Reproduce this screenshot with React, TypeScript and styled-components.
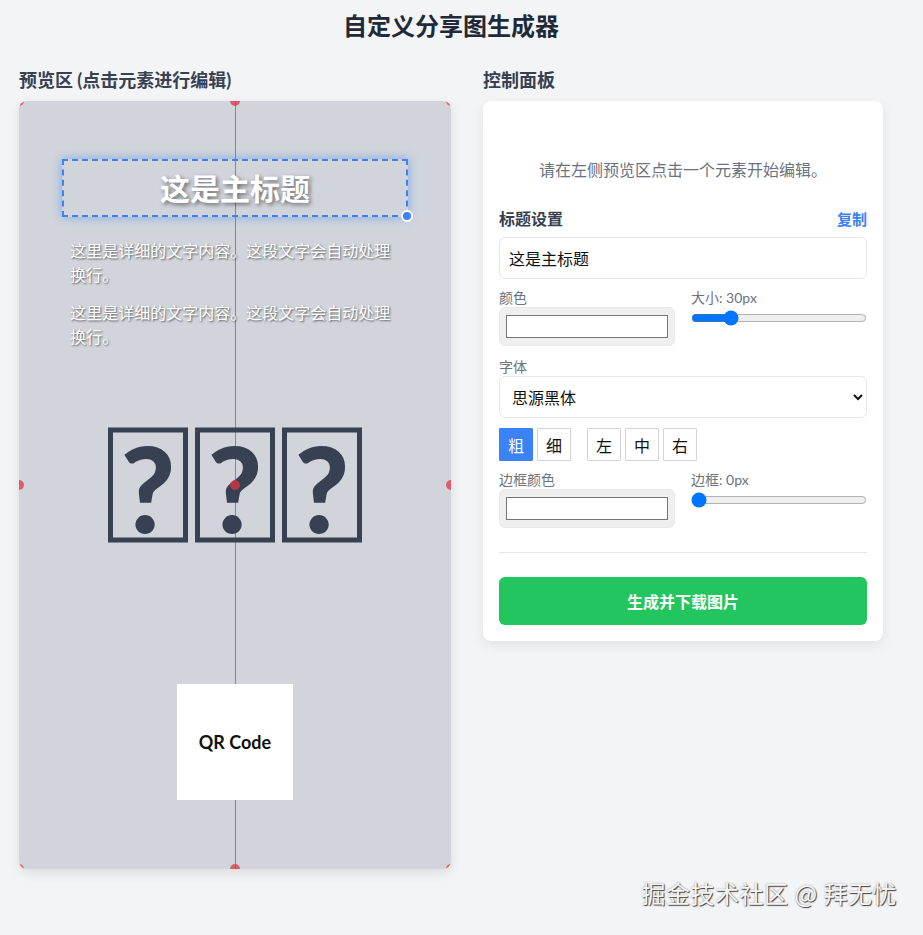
import { FC } from "react";
import styled, { createGlobalStyle } from "styled-components";

const GlobalStyle = createGlobalStyle`
  html, body {
    margin: 0;
    padding: 0;
    background: #f3f4f6;
    font-family: "Lato", "Noto Sans CJK SC", sans-serif;
    color: #1f2937;
  }
`;

const Page = styled.div`
  position: relative;
  min-height: 935px;
  box-sizing: border-box;
  padding: 12px 0 0 19px;
`;

const Title = styled.h1`
  width: 864px;
  margin: 0;
  text-align: center;
  font-size: 24px;
  line-height: 28px;
  font-weight: 700;
  color: #1f2937;
`;

const Columns = styled.div`
  display: flex;
  gap: 32px;
  margin-top: 29px;
  width: 864px;
  align-items: flex-start;
`;

const Column = styled.section<{ $width: number }>`
  width: ${(p) => p.$width}px;
  flex: none;
`;

const ColHeading = styled.h2`
  margin: 0 0 10px;
  font-size: 18px;
  line-height: 22px;
  font-weight: 700;
  color: #374151;
`;

/* ---------- preview canvas ---------- */

const Canvas = styled.div`
  position: relative;
  width: 432px;
  height: 768px;
  background: #d1d5db;
  border-radius: 8px;
  overflow: hidden;
  box-shadow: 0 4px 12px rgba(0, 0, 0, 0.1);
`;

const GuideLine = styled.div`
  position: absolute;
  left: 216px;
  top: 0;
  bottom: 0;
  width: 1px;
  background: #4f8ef7;
`;

const TitleBox = styled.div`
  position: absolute;
  left: 10%;
  top: 58px;
  width: 80%;
  box-sizing: border-box;
  padding: 10px;
  border: 2px dashed #3b82f6;
  box-shadow: 0 0 10px rgba(59, 130, 246, 0.55);
  text-align: center;
  font-size: 30px;
  line-height: 34px;
  font-weight: 700;
  color: #ffffff;
  text-shadow: 2px 2px 4px rgba(0, 0, 0, 0.5);
`;

const Handle = styled.span`
  position: absolute;
  right: -7px;
  bottom: -7px;
  width: 8px;
  height: 8px;
  border-radius: 50%;
  background: #3b82f6;
  border: 2px solid #ffffff;
`;

const TextBox = styled.div`
  position: absolute;
  left: 10%;
  top: 130px;
  width: 80%;
  box-sizing: border-box;
  padding: 8px;
  font-size: 16px;
  line-height: 24px;
  color: #ffffff;
  text-shadow: 1px 1px 2px rgba(0, 0, 0, 0.6);

  p {
    margin: 0 0 14px;
  }
`;

const ImageBox = styled.div`
  position: absolute;
  left: 50%;
  top: 50%;
  transform: translate(-50%, -50%);
  display: flex;
  gap: 7px;
`;

const Tofu = styled.span`
  width: 80px;
  height: 115px;
  box-sizing: border-box;
  border: 5px solid #374151;
  display: flex;
  justify-content: center;
  align-items: flex-start;
  font-family: "Lato", sans-serif;
  font-weight: 900;
  font-size: 118px;
  line-height: 110px;
  color: #374151;
`;

const QrBox = styled.div`
  position: absolute;
  left: 158px;
  top: 583px;
  width: 116px;
  height: 116px;
  background: #ffffff;
  display: flex;
  align-items: center;
  justify-content: center;
  font-family: "Lato", sans-serif;
  font-weight: 700;
  font-size: 18px;
  color: #111111;
`;

const SnapDot = styled.span<{ $x: number; $y: number }>`
  position: absolute;
  left: ${(p) => p.$x}%;
  top: ${(p) => p.$y}%;
  width: 10px;
  height: 10px;
  border-radius: 50%;
  background: rgba(220, 53, 69, 0.75);
  transform: translate(-50%, -50%);
`;

/* ---------- control panel ---------- */

const Panel = styled.div`
  background: #ffffff;
  border-radius: 8px;
  padding: 16px;
  box-shadow: 0 4px 12px rgba(0, 0, 0, 0.08);
`;

const Placeholder = styled.p`
  margin: 0 0 25px;
  padding-top: 41px;
  text-align: center;
  font-size: 16px;
  line-height: 24px;
  color: #6b7280;
`;

const SectionHead = styled.div`
  display: flex;
  justify-content: space-between;
  align-items: center;
  height: 22px;
`;

const SectionTitle = styled.h3`
  margin: 0;
  font-size: 16px;
  font-weight: 700;
  color: #374151;
`;

const LinkButton = styled.button`
  border: none;
  background: none;
  padding: 0;
  font-family: inherit;
  font-size: 15px;
  font-weight: 700;
  color: #3b82f6;
  cursor: pointer;
`;

const TextInput = styled.input`
  display: block;
  width: 100%;
  height: 42px;
  box-sizing: border-box;
  margin-top: 8px;
  padding: 0 9px;
  border: 1px solid #e5e7eb;
  border-radius: 6px;
  font-family: inherit;
  font-size: 16px;
  color: #111111;
  background: #ffffff;
`;

const Grid = styled.div<{ $top: number }>`
  display: grid;
  grid-template-columns: 1fr 1fr;
  gap: 16px;
  margin-top: ${(p) => p.$top}px;
`;

const Field = styled.div<{ $top?: number }>`
  margin-top: ${(p) => p.$top ?? 0}px;
`;

const Label = styled.label`
  display: block;
  font-size: 14px;
  line-height: 19px;
  color: #6b7280;
`;

const ColorInput = styled.input`
  display: block;
  width: 100%;
  height: 39px;
  box-sizing: border-box;
  margin: 0;
  padding: 0;
  border: 1px solid #e9e9e9;
  border-radius: 6px;
  background: #efefef;
  cursor: pointer;

  &::-webkit-color-swatch-wrapper {
    padding: 7px 6px 7px;
  }
  &::-webkit-color-swatch {
    border: 1px solid #767676;
    border-radius: 0;
  }
`;

const Range = styled.input`
  display: block;
  width: 100%;
  margin: 3px 0 0;
  accent-color: #0075ff;
`;

const Select = styled.select`
  display: block;
  width: 100%;
  height: 42px;
  box-sizing: border-box;
  padding: 0 8px;
  border: 1px solid #e5e7eb;
  border-radius: 6px;
  background: #ffffff;
  font-family: inherit;
  font-size: 16px;
  color: #111111;
`;

const ButtonRow = styled.div`
  display: flex;
  gap: 16px;
  margin-top: 10px;
`;

const ButtonGroup = styled.div`
  display: flex;
  gap: 4px;
`;

const ToggleButton = styled.button<{ $active?: boolean }>`
  width: 34px;
  height: 33px;
  padding: 0;
  box-sizing: border-box;
  border: 1px solid ${(p) => (p.$active ? "#3b82f6" : "#d1d5db")};
  border-radius: 1px;
  background: ${(p) => (p.$active ? "#3b82f6" : "#ffffff")};
  color: ${(p) => (p.$active ? "#ffffff" : "#111111")};
  font-family: inherit;
  font-size: 16px;
  cursor: pointer;
`;

const Divider = styled.hr`
  margin: 24px 0 24px;
  border: none;
  border-top: 1px solid #e5e7eb;
`;

const PrimaryButton = styled.button`
  display: block;
  width: 100%;
  height: 48px;
  border: none;
  border-radius: 6px;
  background: #22c55e;
  color: #ffffff;
  font-family: inherit;
  font-size: 16px;
  font-weight: 700;
  cursor: pointer;
`;

const Watermark = styled.div`
  position: absolute;
  right: 26px;
  bottom: 25px;
  font-family: "Noto Sans CJK SC", sans-serif;
  font-size: 24px;
  color: #f5f5f5;
  text-shadow: 1px 1px 1px rgba(0, 0, 0, 0.7), 0 0 2px rgba(0, 0, 0, 0.35);
  letter-spacing: 0.5px;
`;

const dots: [number, number][] = [
  [0, 0], [50, 0], [100, 0],
  [0, 50], [50, 50], [100, 50],
  [0, 100], [50, 100], [100, 100],
];

const PreviewCanvas: FC = () => (
  <Canvas>
    <GuideLine />
    <TitleBox>
      这是主标题
      <Handle />
    </TitleBox>
    <TextBox>
      <p>这里是详细的文字内容。这段文字会自动处理换行。</p>
      <p>这里是详细的文字内容。这段文字会自动处理换行。</p>
    </TextBox>
    <ImageBox>
      <Tofu>?</Tofu>
      <Tofu>?</Tofu>
      <Tofu>?</Tofu>
    </ImageBox>
    <QrBox>QR Code</QrBox>
    {dots.map(([x, y]) => (
      <SnapDot key={`${x}-${y}`} $x={x} $y={y} />
    ))}
  </Canvas>
);

const ControlPanel: FC = () => (
  <Panel>
    <Placeholder>请在左侧预览区点击一个元素开始编辑。</Placeholder>
    <SectionHead>
      <SectionTitle>标题设置</SectionTitle>
      <LinkButton>复制</LinkButton>
    </SectionHead>
    <TextInput type="text" defaultValue="这是主标题" />

    <Grid $top={9}>
      <Field>
        <Label>颜色</Label>
        <ColorInput type="color" defaultValue="#ffffff" />
      </Field>
      <Field>
        <Label>大小: 30px</Label>
        <Range type="range" min={10} max={110} defaultValue={30} />
      </Field>
    </Grid>

    <Field $top={11}>
      <Label>字体</Label>
      <Select defaultValue="思源黑体">
        <option>思源黑体</option>
        <option>思源宋体</option>
      </Select>
    </Field>

    <ButtonRow>
      <ButtonGroup>
        <ToggleButton $active>粗</ToggleButton>
        <ToggleButton>细</ToggleButton>
      </ButtonGroup>
      <ButtonGroup>
        <ToggleButton>左</ToggleButton>
        <ToggleButton>中</ToggleButton>
        <ToggleButton>右</ToggleButton>
      </ButtonGroup>
    </ButtonRow>

    <Grid $top={9}>
      <Field>
        <Label>边框颜色</Label>
        <ColorInput type="color" defaultValue="#ffffff" />
      </Field>
      <Field>
        <Label>边框: 0px</Label>
        <Range type="range" min={0} max={20} defaultValue={0} />
      </Field>
    </Grid>

    <Divider />
    <PrimaryButton>生成并下载图片</PrimaryButton>
  </Panel>
);

const App: FC = () => (
  <Page>
    <GlobalStyle />
    <Title>自定义分享图生成器</Title>
    <Columns>
      <Column $width={432}>
        <ColHeading>预览区 (点击元素进行编辑)</ColHeading>
        <PreviewCanvas />
      </Column>
      <Column $width={400}>
        <ColHeading>控制面板</ColHeading>
        <ControlPanel />
      </Column>
    </Columns>
    <Watermark>掘金技术社区 @ 拜无忧</Watermark>
  </Page>
);

export default App;
